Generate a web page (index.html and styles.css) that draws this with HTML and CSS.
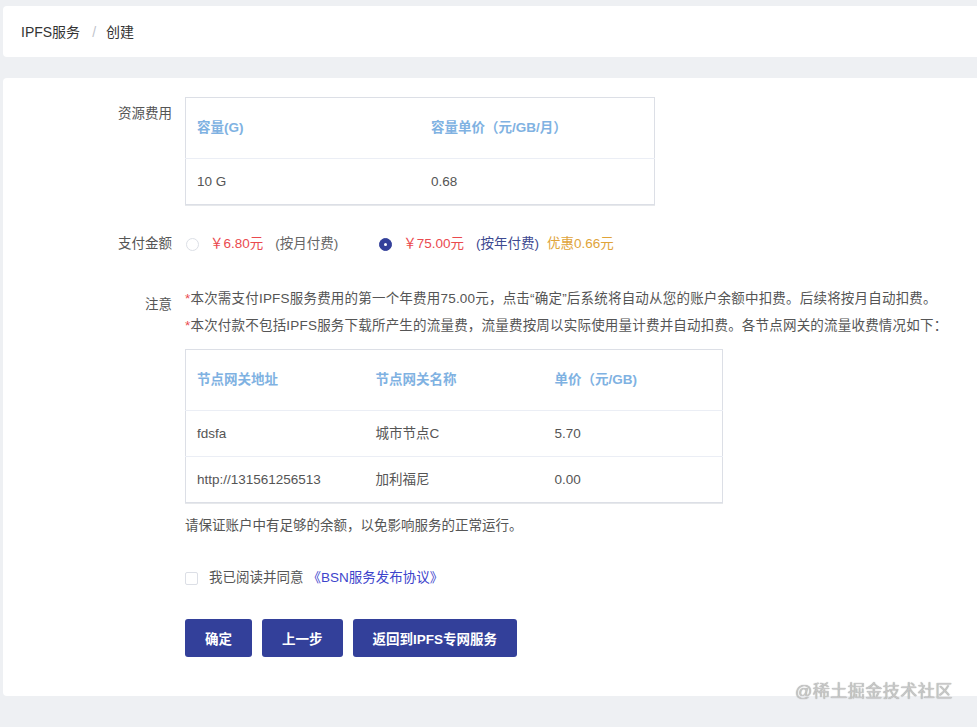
FILE: index.html
```html
<!DOCTYPE html>
<html lang="zh-CN">
<head>
<meta charset="UTF-8">
<meta name="viewport" content="width=device-width, initial-scale=1.0">
<title>IPFS服务 - 创建</title>
<link rel="stylesheet" href="styles.css">
</head>
<body>
<div class="page">
    <div class="breadcrumb">
        <span class="crumb">IPFS服务</span>
        <span class="sep">/</span>
        <span class="crumb current">创建</span>
    </div>

    <div class="card">
        <div class="form-row">
            <div class="label">资源费用</div>
            <div class="content">
                <table class="data-table cap-table">
                    <thead>
                        <tr><th class="col-cap">容量(G)</th><th>容量单价（元/GB/月）</th></tr>
                    </thead>
                    <tbody>
                        <tr><td>10 G</td><td>0.68</td></tr>
                    </tbody>
                </table>
            </div>
        </div>

        <div class="form-row pay-row">
            <div class="label">支付金额</div>
            <div class="content radios">
                <label class="radio">
                    <span class="radio-dot"></span>
                    <span class="price">￥6.80元</span>
                    <span class="period">(按月付费)</span>
                </label>
                <label class="radio checked">
                    <span class="radio-dot"></span>
                    <span class="price">￥75.00元</span>
                    <span class="period">(按年付费)</span>
                    <span class="discount">优惠0.66元</span>
                </label>
            </div>
        </div>

        <div class="form-row note-row">
            <div class="label note-label">注意</div>
            <div class="content">
                <p class="note"><span class="star">*</span>本次需支付IPFS服务费用的第一个年费用75.00元，点击“确定”后系统将自动从您的账户余额中扣费。后续将按月自动扣费。</p>
                <p class="note"><span class="star">*</span>本次付款不包括IPFS服务下载所产生的流量费，流量费按周以实际使用量计费并自动扣费。各节点网关的流量收费情况如下：</p>
                <table class="data-table gw-table">
                    <thead>
                        <tr><th>节点网关地址</th><th>节点网关名称</th><th>单价（元/GB)</th></tr>
                    </thead>
                    <tbody>
                        <tr><td>fdsfa</td><td>城市节点C</td><td>5.70</td></tr>
                        <tr><td>http://131561256513</td><td>加利福尼</td><td>0.00</td></tr>
                    </tbody>
                </table>
                <p class="tip">请保证账户中有足够的余额，以免影响服务的正常运行。</p>
            </div>
        </div>

        <div class="form-row agree-row">
            <div class="label"></div>
            <div class="content">
                <label class="checkbox">
                    <span class="box"></span>
                    <span class="agree-text">我已阅读并同意</span>
                    <a class="agree-link" href="#">《BSN服务发布协议》</a>
                </label>
            </div>
        </div>

        <div class="form-row btn-row">
            <div class="label"></div>
            <div class="content buttons">
                <button class="btn">确定</button>
                <button class="btn">上一步</button>
                <button class="btn">返回到IPFS专网服务</button>
            </div>
        </div>
    </div>
</div>
<div class="watermark">@稀土掘金技术社区</div>
</body>
</html>
```

FILE: styles.css
```css
body {
    margin: 0;
    padding: 0;
    background-color: #eef0f3;
    font-family: "Liberation Sans", "Noto Sans CJK SC", sans-serif;
    font-size: 13.5px;
    line-height: 20px;
    color: #555;
}

.page {
    padding: 6px 0 0 3px;
}

.breadcrumb {
    height: 51px;
    display: flex;
    align-items: center;
    padding-left: 18px;
    background-color: #fff;
    border-radius: 4px 0 0 4px;
    font-size: 14px;
    color: #333;
}

.breadcrumb .sep {
    color: #c0c4cc;
    margin: 0 10px 0 12px;
}

.card {
    margin-top: 21px;
    height: 599px;
    padding-top: 19px;
    background-color: #fff;
    border-radius: 4px 0 0 4px;
}

.form-row {
    display: flex;
}

.label {
    width: 182px;
    flex-shrink: 0;
    padding-right: 13px;
    box-sizing: border-box;
    text-align: right;
    color: #555;
    padding-top: 7px;
}

.content {
    flex: 1;
}

/* tables */
.data-table {
    border-collapse: collapse;
    border: 1px solid #dcdfe6;
    box-shadow: 0 1px 0 #e6e8eb;
    table-layout: fixed;
}

.data-table th {
    height: 60px;
    text-align: left;
    padding: 0 11px;
    color: #7fb2e2;
    font-weight: bold;
    border-bottom: 1px solid #ebeef5;
}

.data-table td {
    height: 45px;
    padding: 0 11px;
    color: #555;
    border-bottom: 1px solid #ebeef5;
}

.data-table tr:last-child td {
    border-bottom: none;
}

.cap-table {
    width: 470px;
}

.cap-table .col-cap {
    width: 212px;
}

.gw-table {
    width: 538px;
    margin-top: 10px;
}

/* pay row */
.pay-row {
    margin-top: 29px;
}

.pay-row .label {
    padding-top: 0;
}

.radios {
    display: flex;
    align-items: center;
    height: 20px;
}

.radio {
    display: flex;
    align-items: center;
    margin-right: 32px;
}

.radio-dot {
    width: 11px;
    height: 11px;
    border: 1px solid #dcdfe6;
    border-radius: 50%;
    background: #fff;
    margin: 0 11px 0 1px;
    box-sizing: content-box;
    position: relative;
}

.radio.checked .radio-dot {
    background: #33409a;
    border-color: #33409a;
}

.radio.checked .radio-dot::after {
    content: "";
    position: absolute;
    left: 4px;
    top: 4px;
    width: 3px;
    height: 3px;
    border-radius: 50%;
    background: #fff;
}

.price {
    color: #ea4a4f;
}

.period {
    color: #666;
    margin: 0 8px 0 12px;
}

.radio.checked .period {
    color: #3e4a91;
}

.discount {
    color: #e0a43a;
}

/* notes */
.note-row {
    margin-top: 31px;
}

.note-label {
    padding-top: 10px;
}

.note {
    margin: 0;
    line-height: 27px;
    color: #555;
    letter-spacing: 0.2px;
}

.star {
    color: #ea4a4f;
}

.tip {
    margin: 13px 0 0;
    line-height: 20px;
    color: #555;
}

/* agree */
.agree-row {
    margin-top: 32px;
}

.agree-row .label {
    padding-top: 0;
}

.checkbox {
    display: flex;
    align-items: center;
    height: 20px;
}

.box {
    width: 11px;
    height: 11px;
    border: 1px solid #dcdfe6;
    border-radius: 2px;
    margin-right: 11px;
}

.agree-text {
    color: #555;
}

.agree-link {
    color: #3d44cc;
    text-decoration: none;
    margin-left: 4px;
}

/* buttons */
.btn-row {
    margin-top: 31px;
}

.buttons {
    display: flex;
    gap: 10px;
}

.btn {
    height: 38px;
    padding: 0 20px;
    background-color: #33409a;
    border: none;
    border-radius: 3px;
    color: #fff;
    font-family: inherit;
    font-size: 13.5px;
    font-weight: bold;
    cursor: pointer;
}

.btn:hover {
    background-color: #2a3585;
}

.watermark {
    position: absolute;
    left: 795px;
    top: 682px;
    font-size: 17px;
    color: #c8c8c8;
    letter-spacing: 0.5px;
    text-shadow: 0 0 1px #888;
}
```
